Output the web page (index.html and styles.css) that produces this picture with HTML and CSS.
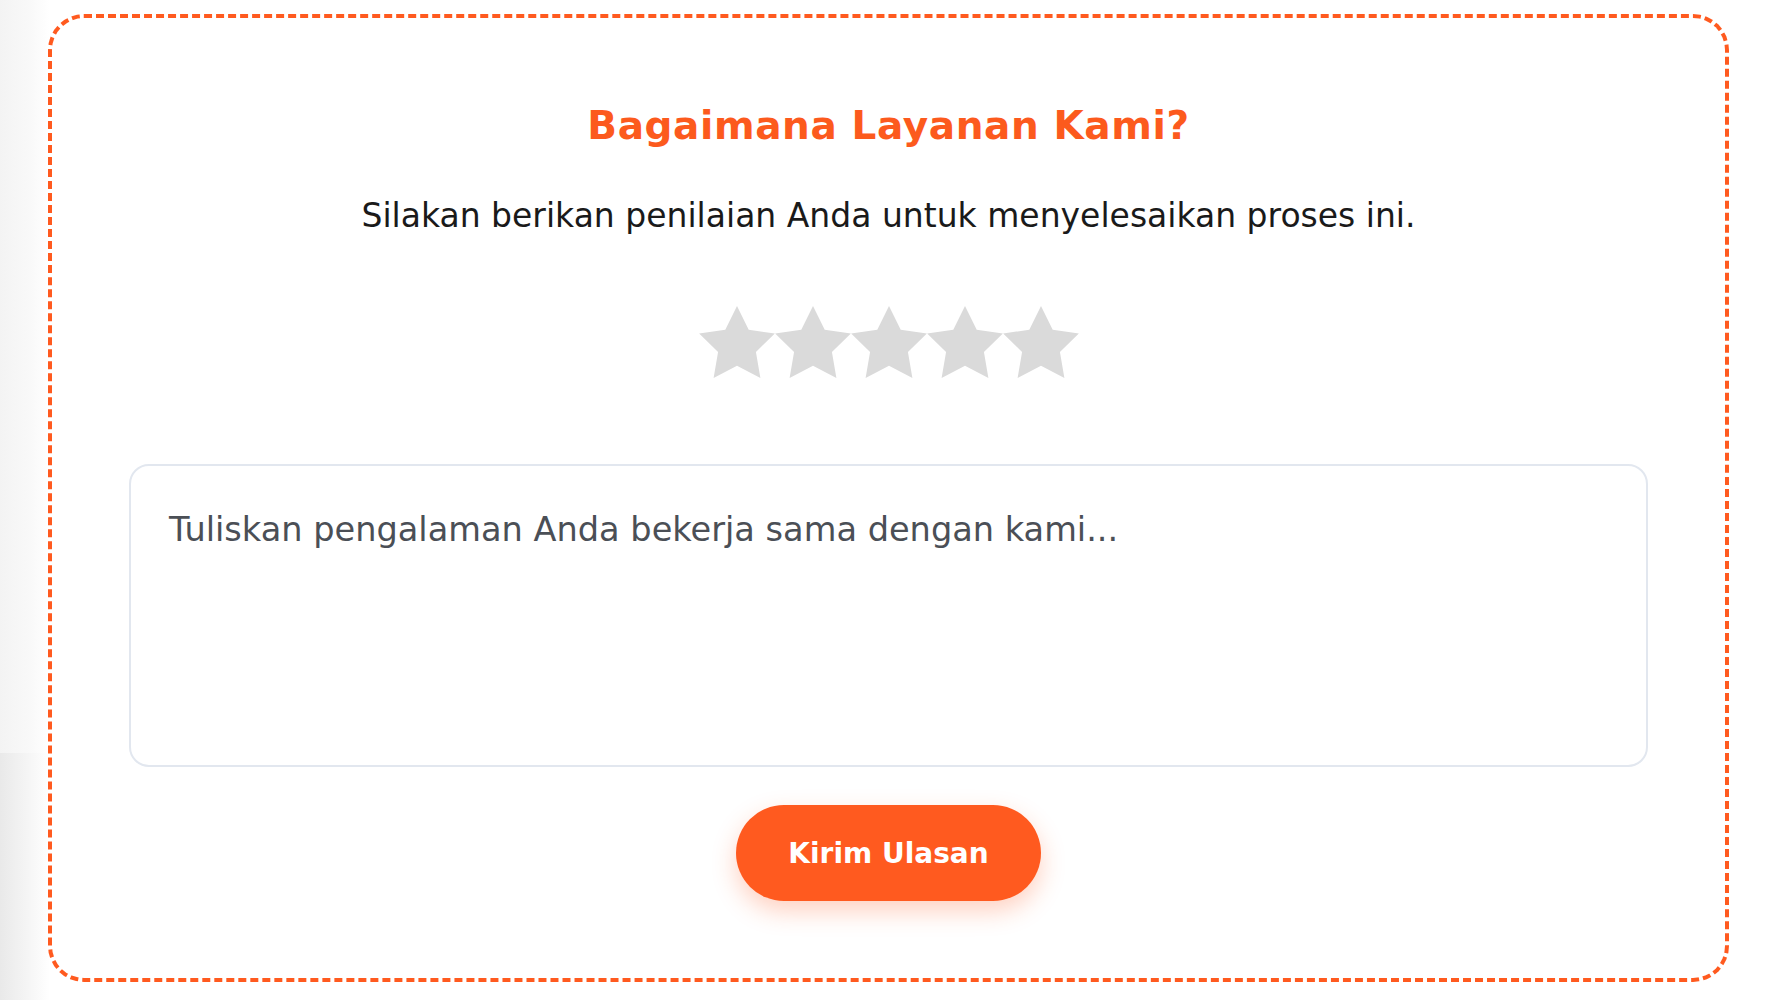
FILE: index.html
```html
<!DOCTYPE html>
<html lang="id">
<head>
<meta charset="utf-8">
<title>Bagaimana Layanan Kami?</title>
<link rel="stylesheet" href="styles.css">
</head>
<body>
  <section class="card">
    <h2 class="title">Bagaimana Layanan Kami?</h2>
    <p class="subtitle">Silakan berikan penilaian Anda untuk menyelesaikan proses ini.</p>
    <div class="stars">
      <svg class="star" viewBox="2 2 20 19.02"><polygon points="12,2 15.09,8.26 22,9.27 17,14.14 18.18,21.02 12,17.77 5.82,21.02 7,14.14 2,9.27 8.91,8.26"/></svg>
      <svg class="star" viewBox="2 2 20 19.02"><polygon points="12,2 15.09,8.26 22,9.27 17,14.14 18.18,21.02 12,17.77 5.82,21.02 7,14.14 2,9.27 8.91,8.26"/></svg>
      <svg class="star" viewBox="2 2 20 19.02"><polygon points="12,2 15.09,8.26 22,9.27 17,14.14 18.18,21.02 12,17.77 5.82,21.02 7,14.14 2,9.27 8.91,8.26"/></svg>
      <svg class="star" viewBox="2 2 20 19.02"><polygon points="12,2 15.09,8.26 22,9.27 17,14.14 18.18,21.02 12,17.77 5.82,21.02 7,14.14 2,9.27 8.91,8.26"/></svg>
      <svg class="star" viewBox="2 2 20 19.02"><polygon points="12,2 15.09,8.26 22,9.27 17,14.14 18.18,21.02 12,17.77 5.82,21.02 7,14.14 2,9.27 8.91,8.26"/></svg>
    </div>
    <textarea class="review" placeholder="Tuliskan pengalaman Anda bekerja sama dengan kami..."></textarea>
    <button class="submit" type="button">Kirim Ulasan</button>
  </section>
</body>
</html>
```
FILE: styles.css
```css
html, body {
  height: 100%;
}
html {
  background:
    linear-gradient(to right, #f3f3f3 0, #f9f9f9 30px, #ffffff 50px) top left / 100% 753px no-repeat,
    linear-gradient(to right, #e9e9e9 0, #f6f6f6 30px, #ffffff 50px);
}
body {
  margin: 0;
  padding: 14px 49px 18px 48px;
  box-sizing: border-box;
  font-family: "DejaVu Sans", "Noto Sans", sans-serif;
}
.card {
  height: 968px;
  box-sizing: border-box;
  border: 4px dashed #ff5a1f;
  border-radius: 36px;
  background: #fff;
  display: flex;
  flex-direction: column;
  align-items: center;
  padding: 84px 0 0;
}
.title {
  margin: 0;
  font-size: 39px;
  line-height: 48px;
  font-weight: 700;
  letter-spacing: 0.6px;
  color: #fc5a1d;
}
.subtitle {
  margin: 46px 0 0;
  font-size: 33px;
  line-height: 40px;
  font-weight: 400;
  color: #1a1a1a;
}
.stars {
  margin-top: 70px;
  display: flex;
}
.star {
  width: 76px;
  height: 72px;
  fill: #dadada;
}
.review {
  margin-top: 86px;
  width: 1519px;
  height: 303px;
  box-sizing: border-box;
  border: 2px solid #e2e7ef;
  border-radius: 20px;
  padding: 44px 38px 20px;
  font-family: "DejaVu Sans", "Noto Sans", sans-serif;
  font-size: 33.6px;
  line-height: 40px;
  color: #222;
  resize: none;
  outline: none;
}
.review::placeholder {
  color: #4b4f56;
}
.submit {
  margin-top: 38px;
  width: 305px;
  height: 96px;
  border: none;
  border-radius: 48px;
  background: #ff5a1f;
  color: #fff;
  font-family: "DejaVu Sans", "Noto Sans", sans-serif;
  font-size: 28px;
  font-weight: 700;
  box-shadow: 0 10px 24px rgba(255, 90, 31, 0.28);
  cursor: pointer;
}
```
